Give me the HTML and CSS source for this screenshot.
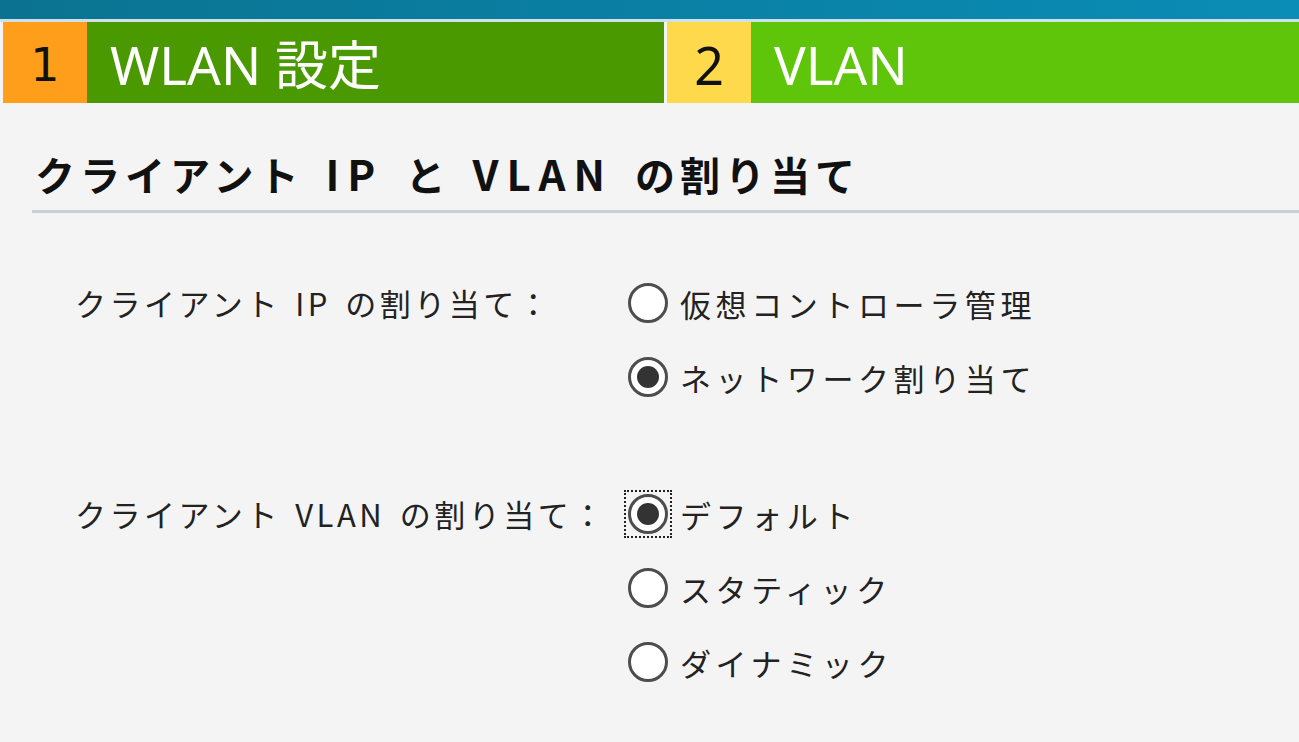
FILE: index.html
```html
<!DOCTYPE html>
<html lang="ja">
<head>
<meta charset="utf-8">
<title>WLAN ウィザード</title>
<link rel="stylesheet" href="styles.css">
</head>
<body>
<header class="topbar"></header>
<nav class="steps">
  <div class="step step-done">
    <span class="step-num">1</span>
    <span class="step-label">WLAN 設定</span>
  </div>
  <div class="step step-current">
    <span class="step-num">2</span>
    <span class="step-label">VLAN</span>
  </div>
</nav>
<main class="content">
  <h2 class="section-title">クライアント <span class="latin">IP</span> と <span class="latin">VLAN</span> の割り当て</h2>
  <form class="form">
    <div class="field">
      <div class="field-label">クライアント IP の割り当て：</div>
      <div class="options">
        <label class="option"><span class="ring"><input type="radio" name="ip"></span><span class="text">仮想コントローラ管理</span></label>
        <label class="option"><span class="ring"><input type="radio" name="ip" checked></span><span class="text">ネットワーク割り当て</span></label>
      </div>
    </div>
    <div class="field">
      <div class="field-label">クライアント VLAN の割り当て：</div>
      <div class="options">
        <label class="option"><span class="ring focused"><input type="radio" name="vlan" checked></span><span class="text">デフォルト</span></label>
        <label class="option"><span class="ring"><input type="radio" name="vlan"></span><span class="text">スタティック</span></label>
        <label class="option"><span class="ring"><input type="radio" name="vlan"></span><span class="text">ダイナミック</span></label>
      </div>
    </div>
  </form>
</main>
</body>
</html>
```
FILE: styles.css
```css
html, body {
  margin: 0;
  padding: 0;
}
body {
  background: #f4f4f4;
  color: #1e1e1e;
  font-family: "Noto Sans CJK JP", "Noto Sans", sans-serif;
  width: 1299px;
  height: 742px;
  overflow: hidden;
}
.topbar {
  height: 19px;
  background: linear-gradient(90deg, #0b7391 0%, #0a80a4 50%, #0a8db6 100%);
  border-bottom: 3px solid #cfe1e8;
}
.steps {
  display: flex;
  height: 81px;
  padding-left: 3px;
  gap: 3px;
}
.step {
  display: flex;
  align-items: center;
}
.step-done {
  width: 661px;
  background: #4a9900;
}
.step-current {
  flex: 1;
  background: #5ec50b;
}
.step-num {
  width: 84px;
  height: 100%;
  display: flex;
  align-items: center;
  justify-content: center;
  font-family: "DejaVu Sans", sans-serif;
  font-size: 46px;
  color: #111;
  padding-top: 4px;
  box-sizing: border-box;
}
.step-done .step-num {
  background: #ff9e1b;
}
.step-current .step-num {
  background: #ffd94c;
  font-family: "Noto Sans", sans-serif;
  font-size: 52px;
}
.step-label {
  padding-left: 23px;
  padding-top: 4px;
  font-family: "Noto Sans", "Noto Sans CJK JP", sans-serif;
  font-size: 53px;
  color: #fff;
  line-height: 1;
}
.content {
  padding-left: 32px;
}
.section-title {
  margin: 44px 0 0;
  padding: 0 0 10px 3px;
  font-size: 40px;
  line-height: 52px;
  font-weight: 700;
  letter-spacing: 5px;
  word-spacing: 8px;
  color: #111;
  border-bottom: 3px solid #c7cfd9;
}
.section-title .latin {
  font-size: 42px;
  letter-spacing: 8px;
}
.form {
  margin-top: 53px;
  padding-left: 43px;
  display: flex;
  flex-direction: column;
  gap: 63px;
}
.field {
  display: grid;
  grid-template-columns: 553px auto;
}
.field-label,
.option .text {
  font-size: 31px;
  letter-spacing: 3.5px;
  color: #222;
}
.option .text {
  letter-spacing: 4.6px;
}
.field-label {
  height: 74px;
  line-height: 74px;
  word-spacing: 4px;
}
.options {
  display: flex;
  flex-direction: column;
}
.option {
  display: flex;
  align-items: center;
  height: 74px;
  gap: 12px;
}
.ring {
  display: flex;
  flex: none;
  width: 40px;
  height: 40px;
}
.ring.focused {
  outline: 2px dotted #222;
  outline-offset: 2px;
}
.ring input {
  appearance: none;
  -webkit-appearance: none;
  margin: 0;
  width: 40px;
  height: 40px;
  border: 3px solid #4d4d4d;
  border-radius: 50%;
  background: #fff;
  box-sizing: border-box;
  display: grid;
  place-items: center;
  outline: none;
}
.ring input:checked::after {
  content: "";
  width: 22px;
  height: 22px;
  border-radius: 50%;
  background: #333;
}
```
